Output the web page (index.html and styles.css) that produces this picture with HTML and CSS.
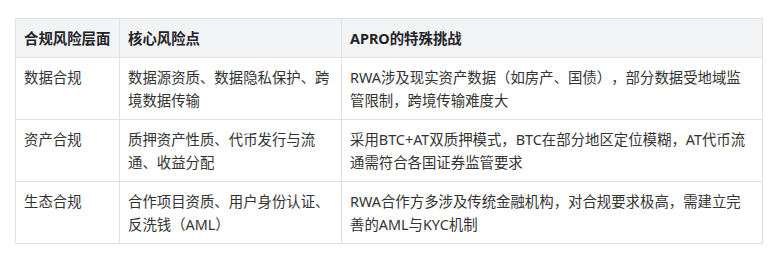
FILE: index.html
```html
<!DOCTYPE html>
<html lang="zh">
<head>
<meta charset="utf-8">
<link rel="stylesheet" href="styles.css">
</head>
<body>
<div class="wrap">
<table class="risk">
  <colgroup>
    <col class="c1"><col class="c2"><col class="c3">
  </colgroup>
  <thead>
    <tr><th>合规风险层面</th><th>核心风险点</th><th>APRO的特殊挑战</th></tr>
  </thead>
  <tbody>
    <tr><td>数据合规</td><td>数据源资质、数据隐私保护、跨境数据传输</td><td>RWA涉及现实资产数据（如房产、国债），部分数据受地域监管限制，跨境传输难度大</td></tr>
    <tr><td>资产合规</td><td>质押资产性质、代币发行与流通、收益分配</td><td>采用BTC+AT双质押模式，BTC在部分地区定位模糊，AT代币流通需符合各国证券监管要求</td></tr>
    <tr><td>生态合规</td><td>合作项目资质、用户身份认证、反洗钱（AML）</td><td>RWA合作方多涉及传统金融机构，对合规要求极高，需建立完善的AML与KYC机制</td></tr>
  </tbody>
</table>
</div>
</body>
</html>
```
FILE: styles.css
```css
html, body {
  margin: 0;
  padding: 0;
  background: #ffffff;
}
.wrap {
  padding: 18px 0 0 15px;
}
.risk {
  width: 747px;
  border-collapse: collapse;
  table-layout: fixed;
  font-family: "Noto Sans", "Noto Sans CJK SC", sans-serif;
  font-size: 14.4px;
  line-height: 23px;
  color: #333333;
  text-spacing-trim: space-all;
}
.c1 { width: 104px; }
.c2 { width: 222px; }
.c3 { width: 421px; }
.risk th, .risk td {
  border: 1px solid #dfe1e5;
  padding: 8px 8px 7px 8px;
  text-align: left;
  vertical-align: top;
}
.risk th {
  background: #f2f3f5;
  font-weight: 700;
  color: #1f2329;
}
```
